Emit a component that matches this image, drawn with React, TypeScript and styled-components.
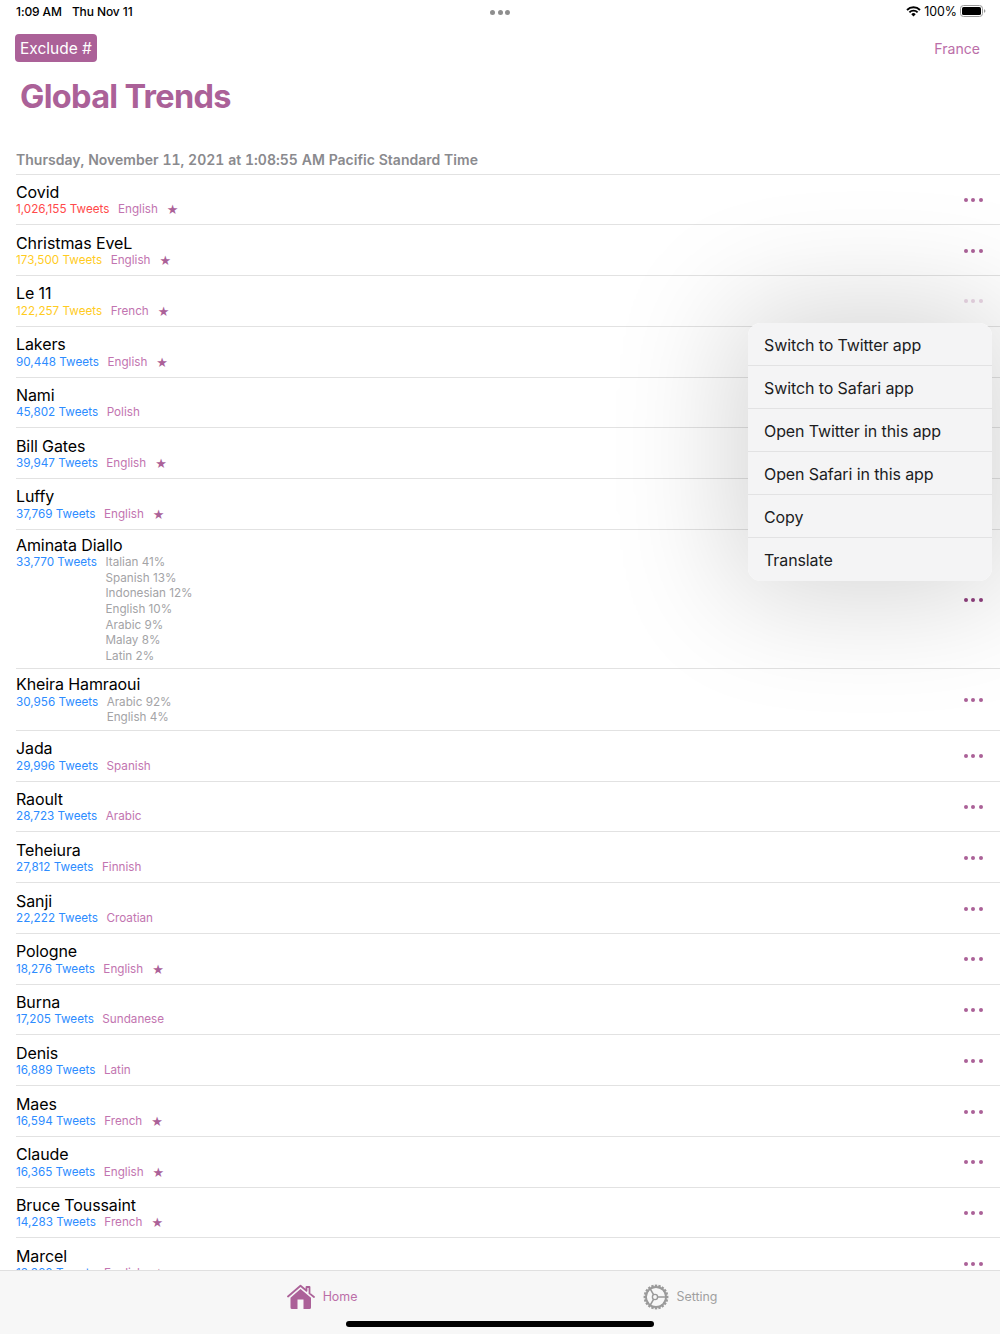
import React from "react";
import styled, { createGlobalStyle } from "styled-components";

const Global = createGlobalStyle`
  html, body { margin: 0; padding: 0; background: #fff; }
  body { font-family: Inter, "Liberation Sans", sans-serif; color: #000; }
`;

const PINK = "#ab6198";

const Page = styled.div`
  position: relative;
  width: 1000px;
  height: 1334px;
  overflow: hidden;
  background: #fff;
`;

const StatusBar = styled.div`
  height: 22px;
  padding: 0 14px 0 16px;
  display: grid;
  grid-template-columns: 1fr auto 1fr;
  align-items: center;
  font-size: 12px;
  font-weight: 500;
`;
const StatusLeft = styled.div`
  display: flex;
  gap: 10px;
  letter-spacing: -0.1px;
`;
const Grabber = styled.div`
  display: flex;
  gap: 2.5px;
  padding-top: 2px;
  margin-left: -2px;
`;
const GrabDot = styled.span`
  width: 5px;
  height: 5px;
  border-radius: 50%;
  background: #8e8e8e;
`;
const StatusRight = styled.div`
  display: flex;
  justify-content: flex-end;
  align-items: center;
  gap: 3px;
  font-size: 12.4px;
  font-weight: 400;
`;

const NavBar = styled.div`
  height: 34px;
  margin-top: 9px;
  padding: 0 20px 0 15px;
  display: flex;
  justify-content: space-between;
  align-items: center;
`;
const ExcludeButton = styled.div`
  height: 28px;
  padding: 0 5px;
  display: flex;
  align-items: center;
  background: ${PINK};
  color: #fff;
  font-size: 15.5px;
  border-radius: 4px;
`;
const CountryLink = styled.div`
  color: #bb6ea8;
  font-size: 14.1px;
`;

const Title = styled.h1`
  margin: 12px 0 0 20px;
  height: 40px;
  line-height: 40px;
  font-size: 32.5px;
  font-weight: 700;
  letter-spacing: -0.7px;
  color: ${PINK};
`;

const SectionHeader = styled.div`
  margin-top: 33px;
  padding-left: 16px;
  height: 20px;
  line-height: 20px;
  font-size: 14px;
  font-weight: 600;
  letter-spacing: 0.02px;
  font-variant-numeric: tabular-nums;
  color: #8a8a8e;
`;

const List = styled.div`
  margin: 3.5px 0 0 16px;
  border-top: 1px solid #e2e2e2;
`;

const RowEl = styled.div`
  box-sizing: border-box;
  min-height: 50.75px;
  padding: 5px 17.5px 4px 0;
  border-bottom: 1px solid #e2e2e2;
  display: flex;
  align-items: center;
  justify-content: space-between;
`;
const RowBody = styled.div`
  display: flex;
  flex-direction: column;
`;
const Name = styled.div`
  font-size: 16px;
  line-height: 20.4px;
  letter-spacing: -0.1px;
`;
const SubLine = styled.div`
  display: flex;
  align-items: flex-start;
  font-size: 11.7px;
  line-height: 15.6px;
`;
const Tweets = styled.span<{ $tone: string }>`
  color: ${(p) => p.$tone};
  margin-right: 8.5px;
`;
const Langs = styled.div<{ $stacked: boolean }>`
  display: flex;
  flex-direction: column;
  color: ${(p) => (p.$stacked ? "#a3a3a6" : "#c274b0")};
`;
const Star = styled.span`
  color: ${PINK};
  margin-left: 9px;
  font-size: 13px;
  line-height: 15.6px;
  font-family: "DejaVu Sans", sans-serif;
`;
const MoreDots = styled.div<{ $dim?: boolean; $dark?: boolean }>`
  display: flex;
  gap: 3.5px;
  opacity: ${(p) => (p.$dim ? 0.25 : 1)};
  & > span {
    width: 4px;
    height: 4px;
    border-radius: 50%;
    background: ${(p) => (p.$dark ? "#8f3f7e" : PINK)};
  }
`;

const Menu = styled.div`
  position: absolute;
  left: 748px;
  top: 323px;
  width: 244px;
  border-radius: 13px;
  overflow: hidden;
  background: #f4f4f5;
`;
const MenuShadow = styled.div`
  position: absolute;
  left: 748px;
  top: 323px;
  width: 244px;
  height: 258px;
  border-radius: 13px;
  box-shadow: 0 0 120px 16px rgba(0, 0, 0, 0.17);
`;
const MenuItem = styled.div`
  box-sizing: border-box;
  height: 43px;
  padding: 1px 0 0 16px;
  display: flex;
  align-items: center;
  font-size: 16px;
  letter-spacing: -0.1px;
  color: #1c1c1e;
  border-bottom: 1.5px solid #e2e2e3;
  &:last-child {
    border-bottom: 0;
  }
`;

const TabBar = styled.div`
  position: absolute;
  left: 0;
  right: 0;
  bottom: 0;
  height: 64px;
  background: #f7f7f7;
  border-top: 1px solid #e0e0e0;
  box-sizing: border-box;
`;
const Tabs = styled.div`
  display: grid;
  grid-template-columns: 1fr 1fr;
  height: 50px;
  padding: 0 141px 0 143px;
`;
const Tab = styled.div<{ $active?: boolean }>`
  display: flex;
  align-items: center;
  justify-content: center;
  gap: 8px;
  font-size: 12.4px;
  padding-top: 1px;
  color: ${(p) => (p.$active ? "#bb6ea8" : "#a0a0a0")};
`;
const HomeIndicator = styled.div`
  position: absolute;
  left: 346px;
  bottom: 7px;
  width: 308px;
  height: 6px;
  border-radius: 3px;
  background: #000;
`;

type Item = {
  name: string;
  tweets: string;
  tone: string;
  langs: string[];
  star?: boolean;
  dim?: boolean;
  dark?: boolean;
};

const RED = "#ff4a4a";
const YEL = "#ffcc1f";
const BLUE = "#2d8cff";

const items: Item[] = [
  { name: "Covid", tweets: "1,026,155 Tweets", tone: RED, langs: ["English"], star: true },
  { name: "Christmas EveL", tweets: "173,500 Tweets", tone: YEL, langs: ["English"], star: true },
  { name: "Le 11", tweets: "122,257 Tweets", tone: YEL, langs: ["French"], star: true, dim: true },
  { name: "Lakers", tweets: "90,448 Tweets", tone: BLUE, langs: ["English"], star: true },
  { name: "Nami", tweets: "45,802 Tweets", tone: BLUE, langs: ["Polish"] },
  { name: "Bill Gates", tweets: "39,947 Tweets", tone: BLUE, langs: ["English"], star: true },
  { name: "Luffy", tweets: "37,769 Tweets", tone: BLUE, langs: ["English"], star: true },
  {
    name: "Aminata Diallo",
    tweets: "33,770 Tweets",
    tone: BLUE,
    dark: true,
    langs: ["Italian 41%", "Spanish 13%", "Indonesian 12%", "English 10%", "Arabic 9%", "Malay 8%", "Latin 2%"],
  },
  { name: "Kheira Hamraoui", tweets: "30,956 Tweets", tone: BLUE, langs: ["Arabic 92%", "English 4%"] },
  { name: "Jada", tweets: "29,996 Tweets", tone: BLUE, langs: ["Spanish"] },
  { name: "Raoult", tweets: "28,723 Tweets", tone: BLUE, langs: ["Arabic"] },
  { name: "Teheiura", tweets: "27,812 Tweets", tone: BLUE, langs: ["Finnish"] },
  { name: "Sanji", tweets: "22,222 Tweets", tone: BLUE, langs: ["Croatian"] },
  { name: "Pologne", tweets: "18,276 Tweets", tone: BLUE, langs: ["English"], star: true },
  { name: "Burna", tweets: "17,205 Tweets", tone: BLUE, langs: ["Sundanese"] },
  { name: "Denis", tweets: "16,889 Tweets", tone: BLUE, langs: ["Latin"] },
  { name: "Maes", tweets: "16,594 Tweets", tone: BLUE, langs: ["French"], star: true },
  { name: "Claude", tweets: "16,365 Tweets", tone: BLUE, langs: ["English"], star: true },
  { name: "Bruce Toussaint", tweets: "14,283 Tweets", tone: BLUE, langs: ["French"], star: true },
  { name: "Marcel", tweets: "13,360 Tweets", tone: BLUE, langs: ["English"], star: true },
];

const menuItems = [
  "Switch to Twitter app",
  "Switch to Safari app",
  "Open Twitter in this app",
  "Open Safari in this app",
  "Copy",
  "Translate",
];

const Wifi = () => (
  <svg width="15" height="11" viewBox="0 0 15 11">
    <path d="M1 4 A9.2 9.2 0 0 1 14 4" fill="none" stroke="#000" strokeWidth="1.9" />
    <path d="M3.4 6.3 A5.8 5.8 0 0 1 11.6 6.3" fill="none" stroke="#000" strokeWidth="1.9" />
    <path d="M7.5 10.6 L5.3 8.2 A3 3 0 0 1 9.7 8.2 Z" fill="#000" />
  </svg>
);

const Battery = () => (
  <svg width="26" height="12" viewBox="0 0 26 12">
    <rect x="0.5" y="0.5" width="22" height="11" rx="3" fill="none" stroke="#9a9a9a" />
    <rect x="2" y="2" width="19" height="8" rx="1.6" fill="#000" />
    <path d="M24 4.2 C25 4.5 25.4 5.2 25.4 6 C25.4 6.8 25 7.5 24 7.8 Z" fill="#9a9a9a" />
  </svg>
);

const HomeIcon = () => (
  <svg width="28" height="26" viewBox="0 0 28 26">
    <path
      d="M1 12.5 L13.5 1.8 L19.5 6.8 V3 H22.5 V9.4 L27 13"
      fill="none"
      stroke="#ab6198"
      strokeWidth="1.8"
      strokeLinecap="round"
      strokeLinejoin="round"
    />
    <path
      fillRule="evenodd"
      d="M13.5 5 L24 13.8 V23.5 Q24 25 22.5 25 H5 Q3.5 25 3.5 23.5 V13.8 Z M10.5 15.5 V25 H16.5 V15.5 Z"
      fill="#ab6198"
    />
  </svg>
);

const gearTeeth = Array.from({ length: 20 }, (_, i) => (i * 360) / 20);

const GearIcon = () => (
  <svg width="26" height="26" viewBox="0 0 26 26">
    <g fill="#9a9a9a">
      {gearTeeth.map((a) => (
        <rect key={a} x="11.8" y="0.6" width="2.4" height="3" transform={`rotate(${a} 13 13)`} />
      ))}
    </g>
    <circle cx="13" cy="13" r="10" fill="none" stroke="#9a9a9a" strokeWidth="1.8" />
    <circle cx="12" cy="13" r="2.6" fill="none" stroke="#9a9a9a" strokeWidth="1.4" />
    <path d="M14.6 13 H23 M10.7 10.8 L7.2 4.9 M10.7 15.2 L7.2 21.1" stroke="#9a9a9a" strokeWidth="1.6" fill="none" />
  </svg>
);

const Row = ({ item }: { item: Item }) => (
  <RowEl>
    <RowBody>
      <Name>{item.name}</Name>
      <SubLine>
        <Tweets $tone={item.tone}>{item.tweets}</Tweets>
        <Langs $stacked={item.langs.length > 1}>
          {item.langs.map((l) => (
            <span key={l}>{l}</span>
          ))}
        </Langs>
        {item.star && <Star>★</Star>}
      </SubLine>
    </RowBody>
    <MoreDots $dim={item.dim} $dark={item.dark}>
      <span />
      <span />
      <span />
    </MoreDots>
  </RowEl>
);

export default function App() {
  return (
    <Page>
      <Global />
      <StatusBar>
        <StatusLeft>
          <span>1:09 AM</span>
          <span>Thu Nov 11</span>
        </StatusLeft>
        <Grabber>
          <GrabDot />
          <GrabDot />
          <GrabDot />
        </Grabber>
        <StatusRight>
          <Wifi />
          <span>100%</span>
          <Battery />
        </StatusRight>
      </StatusBar>
      <NavBar>
        <ExcludeButton>Exclude #</ExcludeButton>
        <CountryLink>France</CountryLink>
      </NavBar>
      <Title>Global Trends</Title>
      <SectionHeader>Thursday, November 11, 2021 at 1:08:55 AM Pacific Standard Time</SectionHeader>
      <List>
        {items.map((it) => (
          <Row key={it.name} item={it} />
        ))}
      </List>
      <MenuShadow />
      <Menu>
        {menuItems.map((m) => (
          <MenuItem key={m}>{m}</MenuItem>
        ))}
      </Menu>
      <TabBar>
        <Tabs>
          <Tab $active>
            <HomeIcon />
            <span>Home</span>
          </Tab>
          <Tab>
            <GearIcon />
            <span>Setting</span>
          </Tab>
        </Tabs>
      </TabBar>
      <HomeIndicator />
    </Page>
  );
}
